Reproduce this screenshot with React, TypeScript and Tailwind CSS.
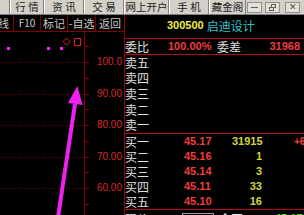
import React from "react";

const cjk = { fontFamily: '"Noto Sans CJK SC", "Liberation Sans", sans-serif' };
const num = { fontFamily: '"Liberation Sans", Arial, sans-serif' };

const menus = [
  { label: "行 情", w: "w-[34px]" },
  { label: "资 讯", w: "w-[40px]" },
  { label: "交 易", w: "w-[40px]" },
  { label: "网上开户", w: "w-[45px]" },
  { label: "手 机", w: "w-[40px]" },
  { label: "藏金阁", w: "w-[37px]" },
];

const sells = ["卖五", "卖四", "卖三", "卖二", "卖一"];

const buys = [
  { label: "买一", price: "45.17", vol: "31915", chg: "+6" },
  { label: "买二", price: "45.16", vol: "1", chg: "" },
  { label: "买三", price: "45.14", vol: "3", chg: "" },
  { label: "买四", price: "45.11", vol: "33", chg: "" },
  { label: "买五", price: "45.10", vol: "16", chg: "" },
];

// y positions inside the chart box (chart starts at page y=32)
const gridLines = [
  { y: 30, label: "100.0" },
  { y: 62, label: "90.00" },
  { y: 93, label: "80.00" },
  { y: 125, label: "70.00" },
  { y: 156, label: "60.00" },
];
const ticks = [14, 30, 46, 62, 77, 93, 109, 125, 140, 156, 172];

function MenuBar() {
  return (
    <div className="shrink-0 flex h-[15px] bg-[#d4d0c8] border-b border-[#808080] text-[10.5px] text-[#202020] leading-none" style={cjk}>
      <div className="w-[10px] border-r border-[#808080]" />
      {menus.map((m) => (
        <div
          key={m.label}
          className={`${m.w} flex items-center justify-center border-l border-white border-r border-r-[#808080] whitespace-pre`}
        >
          {m.label}
        </div>
      ))}
      <div className="flex-1 flex items-center gap-[3px] pl-[1px]">
        <div className="w-[15px] h-[11px] border border-[#909090] bg-[#e4e0d8] flex items-end justify-center pb-[4px]">
          <div className="w-[7px] h-[1px] bg-[#606060]" />
        </div>
        <div className="w-[15px] h-[11px] border border-[#909090] bg-[#e4e0d8] relative">
          <div className="absolute left-[5px] top-[1px] w-[5px] h-[4px] border border-[#606060]" />
          <div className="absolute left-[3px] top-[4px] w-[5px] h-[4px] border border-[#606060] bg-[#e4e0d8]" />
        </div>
        <div className="ml-[2px] w-[15px] h-[11px] border border-[#909090] bg-[#e4e0d8] flex items-center justify-center text-[9px] text-[#505050]" style={num}>
          ✕
        </div>
      </div>
    </div>
  );
}

function Toolbar() {
  const cells = [
    { t: "K线", w: "w-[14px]", right: true },
    { t: "F10", w: "w-[27px]" },
    { t: "标记", w: "w-[27px]" },
    { t: "-自选", w: "w-[28px]" },
    { t: "返回", w: "w-[28px]", last: true },
  ];
  return (
    <div className="shrink-0 flex h-[17px] border-b border-[#800000] text-[11px] text-[#c8c8c8] leading-none" style={cjk}>
      {cells.map((c) => (
        <div
          key={c.t}
          className={`${c.w} h-full flex items-center overflow-hidden ${c.right ? "justify-end pr-[4px]" : "justify-center"} ${c.last ? "" : "border-r border-[#800000]"}`}
        >
          <span className={`whitespace-nowrap ${c.t === "F10" ? "text-[10px]" : ""}`}>{c.t}</span>
        </div>
      ))}
    </div>
  );
}

function Chart() {
  return (
    <div className="relative flex-1 overflow-hidden">
      <svg width="124" height="184" className="absolute left-0 top-0">
        <line x1="84.5" y1="0" x2="84.5" y2="184" stroke="#800000" strokeWidth="1" />
        {gridLines.map((g) => (
          <line key={g.y} x1="0" y1={g.y + 0.5} x2="82" y2={g.y + 0.5} stroke="#900000" strokeWidth="1" strokeDasharray="1 2" />
        ))}
        {ticks.map((t) => (
          <line key={t} x1="85" y1={t + 0.5} x2="89" y2={t + 0.5} stroke="#900000" strokeWidth="1" />
        ))}
        <rect x="7" y="15" width="3" height="3" fill="#ff20ff" />
        <rect x="47" y="15" width="3" height="3" fill="#ff20ff" />
        <rect x="60" y="15" width="3" height="3" fill="#ff20ff" />
        <polygon points="66.5,6 70,9.5 66.5,13 63,9.5" fill="none" stroke="#e02020" strokeWidth="1" />
        <rect x="74.5" y="6.5" width="6" height="7" fill="none" stroke="#e02020" strokeWidth="1" />
        <line x1="57" y1="192" x2="75" y2="72" stroke="#f020f0" strokeWidth="4" />
        <polygon points="77.4,54 68,71 82.5,73" fill="#f020f0" />
      </svg>
      {gridLines.map((g) => (
        <div
          key={g.label}
          className="absolute right-[2px] text-[10px] leading-[10px] text-[#d82828]"
          style={{ ...num, top: g.y - 5 }}
        >
          {g.label}
        </div>
      ))}
    </div>
  );
}

function RightPanel() {
  return (
    <div className="w-[180px] border-l border-[#a00000] flex flex-col overflow-hidden">
      <div className="shrink-0 h-[24px] border-b border-[#b01010] flex items-center pl-[42px] pb-[2px] leading-none">
        <span className="text-[11px] font-bold text-[#f0f040]" style={num}>300500</span>
        <span className="ml-[3px] text-[12px] text-[#2ec4c8]" style={cjk}>启迪设计</span>
      </div>

      <div className="shrink-0 h-[16px] border-b border-[#b01010] flex items-center leading-none">
        <span className="w-[43px] text-[12px] text-[#e0e0e0]" style={cjk}>委比</span>
        <span className="w-[49px] text-[11px] font-bold text-[#f03c3c]" style={num}>100.00%</span>
        <span className="w-[30px] text-[12px] text-[#e0e0e0]" style={cjk}>委差</span>
        <span className="flex-1 text-right pr-[4px] text-[11px] font-bold text-[#f03c3c]" style={num}>31968</span>
      </div>

      <div className="shrink-0 h-[79px] border-b border-[#b01010] flex flex-col">
        {sells.map((s) => (
          <div key={s} className="flex-1 flex items-center text-[12px] text-[#e0e0e0] leading-none" style={cjk}>
            {s}
          </div>
        ))}
      </div>

      <div className="shrink-0 h-[76px] border-b border-[#b01010] flex flex-col">
        {buys.map((b) => (
          <div key={b.label} className="h-[15px] flex items-center leading-none">
            <span className="w-[59px] text-[12px] text-[#e0e0e0]" style={cjk}>{b.label}</span>
            <span className="w-[48px] text-[11px] font-bold text-[#f03c3c]" style={num}>{b.price}</span>
            <span className="w-[30px] text-right text-[11px] font-bold text-[#d4d43c]" style={num}>{b.vol}</span>
            <span className="flex-1 pl-[32px] text-[10px] font-bold text-[#f03c3c] whitespace-nowrap overflow-hidden" style={num}>{b.chg}</span>
          </div>
        ))}
      </div>

      <div className="shrink-0 h-[16px] flex items-start leading-none pt-[3px]">
        <span className="w-[57px] text-[12px] text-[#e0e0e0]" style={cjk}>现价</span>
        <span className="w-[32px] border border-[#a0a0a0] text-[11px] font-bold text-[#f03c3c] text-center" style={num}>45.17</span>
        <span className="ml-[5px] w-[56px] text-[12px] text-[#e0e0e0]" style={cjk}>今开</span>
        <span className="text-[11px] font-bold text-[#30e030]" style={num}>45.17</span>
      </div>
    </div>
  );
}

export default function App() {
  return (
    <div className="w-[304px] h-[215px] overflow-hidden bg-black flex flex-col">
      <MenuBar />
      <div className="flex flex-1 min-h-0">
        <div className="w-[124px] flex flex-col">
          <Toolbar />
          <Chart />
        </div>
        <RightPanel />
      </div>
    </div>
  );
}
